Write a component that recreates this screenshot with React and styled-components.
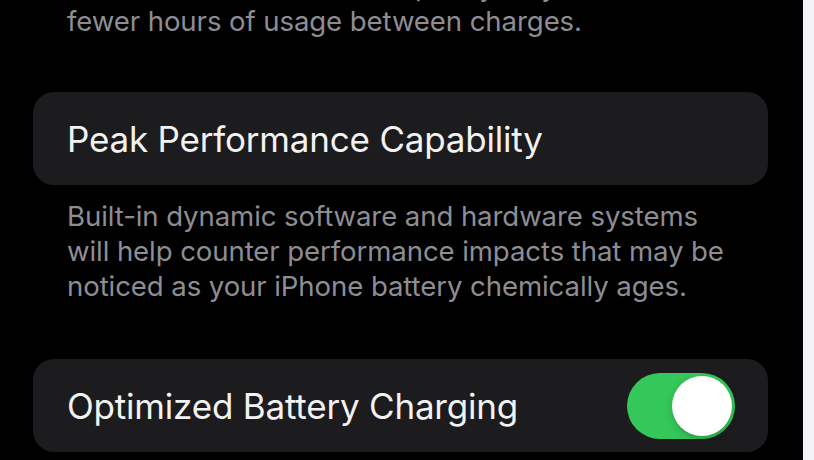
import React from "react";
import styled, { createGlobalStyle } from "styled-components";

const GlobalStyle = createGlobalStyle`
  html, body {
    margin: 0;
    padding: 0;
    background: #000;
  }
  body {
    font-family: Inter, "Noto Sans", "Liberation Sans", sans-serif;
    -webkit-font-smoothing: antialiased;
  }
`;

const Screen = styled.div`
  display: flex;
  width: 814px;
  height: 460px;
  overflow: hidden;
  background: #000;
`;

const Settings = styled.div`
  flex: 0 0 803px;
  display: flex;
  flex-direction: column;
  padding: 0 35px 0 33px;
  box-sizing: border-box;
`;

const Edge = styled.div`
  flex: 1;
  background: #f2f2f7;
`;

const Footer = styled.p`
  margin: ${(p) => p.$top}px 0 0;
  padding: 0 0 0 34px;
  font-size: 27.6px;
  line-height: 35px;
  letter-spacing: -0.1px;
  color: #8d8d93;
  white-space: nowrap;
`;

const Card = styled.div`
  display: flex;
  align-items: center;
  justify-content: space-between;
  height: 93px;
  margin-top: ${(p) => p.$top}px;
  padding: 0 33px 0 34px;
  border-radius: 21px;
  background: #1c1c1e;
`;

const Label = styled.span`
  font-size: 35px;
  letter-spacing: -0.2px;
  color: #f2f2f2;
`;

const Toggle = styled.div`
  position: relative;
  width: 108px;
  height: 66px;
  border-radius: 33px;
  background: ${(p) => (p.$on ? "#34c759" : "#39393d")};
`;

const Knob = styled.div`
  position: absolute;
  top: 3px;
  left: ${(p) => (p.$on ? "45px" : "3px")};
  width: 60px;
  height: 60px;
  border-radius: 50%;
  background: #fff;
  box-shadow: 0 3px 8px rgba(0, 0, 0, 0.15), 0 3px 1px rgba(0, 0, 0, 0.06);
`;

export default function App() {
  return (
    <>
      <GlobalStyle />
      <Screen>
        <Settings>
          <Footer $top={-31}>
            when it was new. Lower capacity may result in
            <br />
            fewer hours of usage between charges.
          </Footer>
          <Card $top={53}>
            <Label>Peak Performance Capability</Label>
          </Card>
          <Footer $top={14}>
            Built-in dynamic software and hardware systems
            <br />
            will help counter performance impacts that may be
            <br />
            noticed as your iPhone battery chemically ages.
          </Footer>
          <Card $top={55}>
            <Label>Optimized Battery Charging</Label>
            <Toggle $on>
              <Knob $on />
            </Toggle>
          </Card>
        </Settings>
        <Edge />
      </Screen>
    </>
  );
}
